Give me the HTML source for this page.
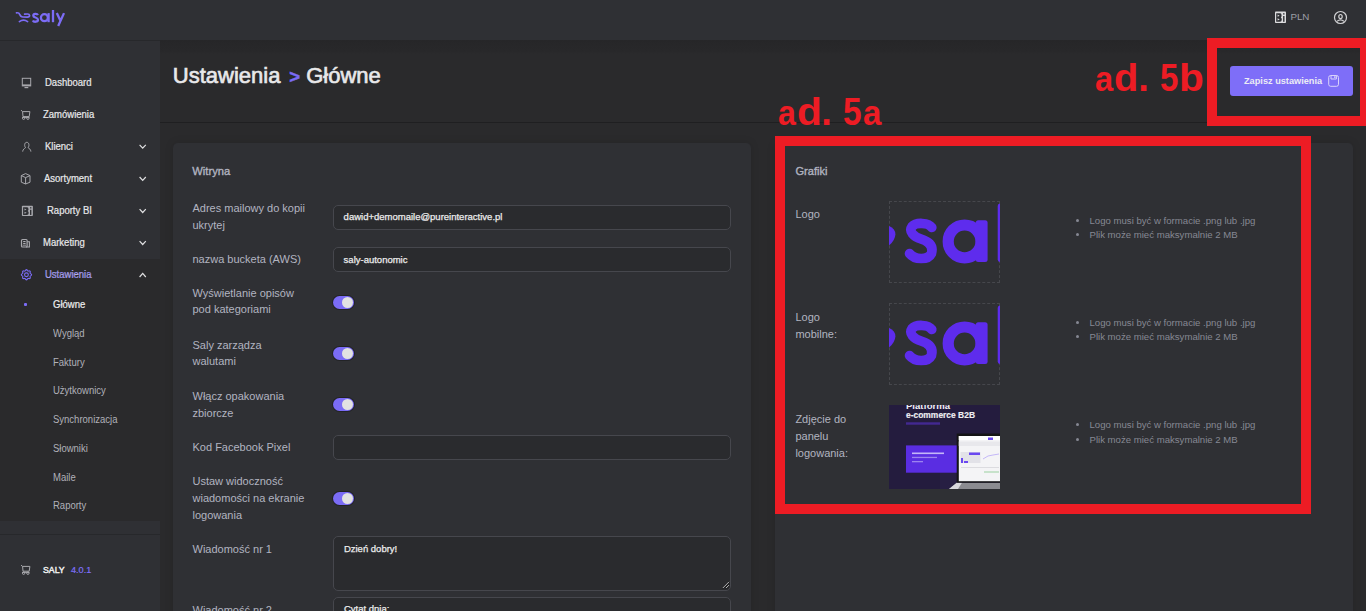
<!DOCTYPE html>
<html><head><meta charset="utf-8">
<style>
*{margin:0;padding:0;box-sizing:border-box}
html,body{width:1366px;height:611px;overflow:hidden;background:#2a2a2c;font-family:"Liberation Sans",sans-serif}
.a{position:absolute}
.t{position:absolute;white-space:nowrap;line-height:1}
#hdr{left:0;top:0;width:1366px;height:40px;background:#2f3034}
#hline{left:0;top:40px;width:160px;height:1px;background:#27282b}
#sbU{left:0;top:41px;width:160px;height:218px;background:#2f3034}
#sbL{left:0;top:259px;width:160px;height:262px;background:#2a2a2c}
#sbS{left:0;top:521px;width:160px;height:13px;background:#2f3034}
#sbLine{left:0;top:534px;width:160px;height:1px;background:#27282b}
#sbB{left:0;top:535px;width:160px;height:76px;background:#2f3034}
.mi{font-size:10px;color:#e8e8ea;-webkit-text-stroke:0.2px #e8e8ea;transform:scaleX(.95);transform-origin:0 0}
.sm{font-size:10px;color:#b0b1b9;transform:scaleX(.95);transform-origin:0 0}
.lbl{font-size:11px;color:#b2b4c0}
.inp{position:absolute;left:333px;width:398px;border:1px solid #46474d;border-radius:5px;background:#2a2b2e}
.itx{font-size:9.5px;color:#ececec;-webkit-text-stroke:0.25px #ececec}
.tg{position:absolute;left:333px;width:21px;height:13px;border-radius:7px;background:#7b6cf6;box-shadow:0 0 0 1px #222326}
.tg i{position:absolute;right:1px;top:1px;width:11px;height:11px;border-radius:50%;background:#e2e2e2}
.card{position:absolute;top:143px;height:480px;background:#2f3034;border-radius:5px;box-shadow:0 0 8px rgba(0,0,0,.13)}
.bl{font-size:9.6px;color:#868893}
.dot{position:absolute;width:3px;height:3px;border-radius:50%;background:#868893}
.red{color:#ed1c24;font-weight:bold;font-size:38px}
.rbox{position:absolute;border:10px solid #ed1c24}
.dash{position:absolute;left:889px;width:111px;height:82px;border:1px dashed #46474c}
</style></head><body>
<div id="hdr" class="a"></div>
<div id="hline" class="a"></div>
<div id="sbU" class="a"></div>
<div id="sbL" class="a"></div>
<div id="sbS" class="a"></div>
<div id="sbLine" class="a"></div>
<div id="sbB" class="a"></div>
<div class="a" style="left:160px;top:40px;width:1206px;height:20px;background:linear-gradient(#262628,#28282a 55%,#2a2a2c 70%,#2a2a2c)"></div>
<!-- main line -->
<div class="a" style="left:160px;top:122px;width:1206px;height:1px;background:#1f1f21"></div>

<!-- logo -->
<svg class="a" style="left:0;top:0" width="80" height="40" viewBox="0 0 80 40">
 <g fill="none" stroke="#7c6cf5" stroke-linecap="round" stroke-width="1.7">
  <path d="M16.5,12.8 Q19,12.4 19.8,14.6 Q20.5,16.9 22.8,17 L27.3,17.2 Q29.6,17 29.6,15.5 Q29.4,13.9 27.4,14 L24.6,14.2"/>
  <path d="M19.4,21.6 Q23.5,18.8 27.6,21.6"/>
 </g>
 <g fill="none" stroke="#7c6cf5" stroke-width="2.3">
  <path d="M38,15 C37.2,13.6 33.3,13.3 33.3,15.7 C33.3,17.8 38,17.2 38,19.7 C38,22.2 33.7,22.3 32.8,20.5"/>
  <circle cx="44.4" cy="17.7" r="3.5"/>
  <path d="M48.6,13.1 V22.2"/>
  <path d="M53,10 V22.2"/>
  <path d="M56.8,13.1 L60.8,21.6 M64,13.1 L58.2,26"/>
 </g>
</svg>

<!-- header right -->
<svg class="a" style="left:1270px;top:8px" width="20" height="20" viewBox="1270 8 20 20">
 <rect x="1275" y="11.6" width="11" height="11.4" rx="0.8" fill="#dcdcde"/>
 <path d="M1276.20,13.20 H1280.20 Q1281.60,13.20 1281.60,15.40 Q1281.60,16.80 1280.80,17.40 Q1281.80,18.00 1281.80,19.60 Q1281.80,21.80 1280.00,21.80 H1276.20 Z" fill="#2f3034"/><path d="M1277.60,14.60 L1279.60,15.70 L1277.60,16.80 Z M1277.60,18.20 L1279.80,19.40 L1277.60,20.60 Z" fill="#dcdcde"/>
 <rect x="1283.10" y="13.20" width="1.40" height="1.40" fill="#2f3034"/>
 <rect x="1283.10" y="16.00" width="1.40" height="5.80" fill="#2f3034"/>
</svg>
<div class="t" style="left:1290.5px;top:12.4px;font-size:9.8px;color:#9d9ea5;letter-spacing:-0.1px">PLN</div>
<svg class="a" style="left:1333px;top:10px" width="16" height="16" viewBox="0 0 16 16">
 <g fill="none" stroke="#d2d2d4" stroke-width="1.2">
  <circle cx="7.5" cy="7.5" r="6"/>
  <ellipse cx="7.5" cy="6.6" rx="1.7" ry="2.1"/>
  <path d="M4.1,11.2 Q7.5,8.4 10.9,11.2"/>
 </g>
</svg>


<!-- sidebar icons -->
<svg class="a" style="left:0;top:60px" width="40" height="240" viewBox="0 60 40 240">
 <g fill="none" stroke="#a8a8ad" stroke-width="1">
  <rect x="22.3" y="78.3" width="8.4" height="7.6"/>
  <path d="M22.3,85.2 H30.7" stroke-width="1.6"/>
  <path d="M24.5,87.6 H28.3" stroke-width="1.2"/>
  <!-- cart -->
  <path d="M21,110.2 L22.6,111.6 L23,116.6 H29.2 L29.9,111.6 H22.6"/>
  <circle cx="23.6" cy="118.2" r="1.2"/><circle cx="27.9" cy="118.2" r="1.2"/>
  <path d="M22,117.4 H29.4"/>
  <!-- person -->
  <path d="M25.6,147.6 C24.2,146.4 24.2,142.3 26.8,142.3 C29.4,142.3 29.4,146.4 28,147.6 C29.2,148.5 30.8,149.4 30.9,151.6 M25.6,147.6 C24.4,148.5 22.8,149.4 22.7,151.6"/>
  <!-- box -->
  <path d="M25.6,173.6 L30,175.6 V182.2 L25.6,184 L21.3,182.2 V175.6 Z M21.3,175.6 L25.6,177.6 L30,175.6 M25.6,177.6 V184"/>
 </g>
 <g fill="none" stroke="#a8a8ad" stroke-width="1">
  
  <rect x="21.5" y="239.5" width="5.6" height="7.5" rx="1" stroke-width="1.2"/>
  <path d="M27.1,241.8 H29.4 V247 H26" stroke-width="1.1"/>
  <path d="M23.2,241.6 H25.6 M23.2,243.6 H25.6" stroke="#bdbdc2" stroke-width="1"/>
  <rect x="22.6" y="244.6" width="3.6" height="1.8" fill="#77777c" stroke="none"/>
 </g>
 <rect x="21.9" y="205.8" width="11" height="10.2" rx="0.8" fill="#a8a8ad"/>
 <path d="M23.10,207.23 H27.10 Q28.50,207.23 28.50,209.20 Q28.50,210.45 27.70,210.99 Q28.70,211.53 28.70,212.96 Q28.70,214.93 26.90,214.93 H23.10 Z" fill="#2f3034"/><path d="M24.50,208.48 L26.50,209.47 L24.50,210.45 Z M24.50,211.71 L26.70,212.78 L24.50,213.85 Z" fill="#a8a8ad"/>
 <rect x="30.00" y="207.23" width="1.40" height="1.25" fill="#2f3034"/>
 <rect x="30.00" y="209.74" width="1.40" height="5.19" fill="#2f3034"/>
 <g fill="none" stroke="#7b6cf6" stroke-width="1.1">
  <path d="M31.55,274.75 L31.47,275.08 L31.23,275.38 L30.91,275.64 L30.58,275.86 L30.31,276.06 L30.15,276.28 L30.10,276.55 L30.15,276.89 L30.23,277.28 L30.28,277.69 L30.23,278.06 L30.06,278.36 L29.76,278.53 L29.39,278.58 L28.98,278.53 L28.59,278.45 L28.25,278.40 L27.98,278.45 L27.76,278.61 L27.56,278.88 L27.34,279.21 L27.08,279.53 L26.78,279.77 L26.45,279.85 L26.12,279.77 L25.82,279.53 L25.56,279.21 L25.34,278.88 L25.14,278.61 L24.92,278.45 L24.65,278.40 L24.31,278.45 L23.92,278.53 L23.51,278.58 L23.14,278.53 L22.84,278.36 L22.67,278.06 L22.62,277.69 L22.67,277.28 L22.75,276.89 L22.80,276.55 L22.75,276.28 L22.59,276.06 L22.32,275.86 L21.99,275.64 L21.67,275.38 L21.43,275.08 L21.35,274.75 L21.43,274.42 L21.67,274.12 L21.99,273.86 L22.32,273.64 L22.59,273.44 L22.75,273.22 L22.80,272.95 L22.75,272.61 L22.67,272.22 L22.62,271.81 L22.67,271.44 L22.84,271.14 L23.14,270.97 L23.51,270.92 L23.92,270.97 L24.31,271.05 L24.65,271.10 L24.92,271.05 L25.14,270.89 L25.34,270.62 L25.56,270.29 L25.82,269.97 L26.12,269.73 L26.45,269.65 L26.78,269.73 L27.08,269.97 L27.34,270.29 L27.56,270.62 L27.76,270.89 L27.98,271.05 L28.25,271.10 L28.59,271.05 L28.98,270.97 L29.39,270.92 L29.76,270.97 L30.06,271.14 L30.23,271.44 L30.28,271.81 L30.23,272.22 L30.15,272.61 L30.10,272.95 L30.15,273.22 L30.31,273.44 L30.58,273.64 L30.91,273.86 L31.23,274.12 L31.47,274.42 L31.55,274.75Z"/>
  <circle cx="26.45" cy="274.75" r="1.9"/>
 </g>
</svg>
<!-- chevrons -->
<svg class="a" style="left:130px;top:130px" width="30" height="160" viewBox="130 130 30 160">
 <g fill="none" stroke="#e0e0e2" stroke-width="1.2">
  <path d="M139.6,144.9 L142.7,148.2 L145.8,144.9"/>
  <path d="M139.6,177 L142.7,180.3 L145.8,177"/>
  <path d="M139.6,209.2 L142.7,212.5 L145.8,209.2"/>
  <path d="M139.6,241.2 L142.7,244.5 L145.8,241.2"/>
  <path d="M139.6,277 L142.7,273.4 L145.8,277"/>
 </g>
</svg>
<svg class="a" style="left:18px;top:562px" width="16" height="16" viewBox="18 562 16 16">
 <g fill="none" stroke="#a8a8ad" stroke-width="1">
  <path d="M21,565.2 L22.6,566.4 L23,571.2 H29.2 L29.9,566.4 H22.6"/>
  <circle cx="23.6" cy="573.2" r="1.2"/><circle cx="27.9" cy="573.2" r="1.2"/>
  <path d="M22,572.4 H29.4"/>
 </g>
</svg>

<!-- sidebar menu -->
<div class="t mi" style="left:45.2px;top:77.98px">Dashboard</div>
<div class="t mi" style="left:43.4px;top:109.68px">Zamówienia</div>
<div class="t mi" style="left:44.9px;top:142.08px">Klienci</div>
<div class="t mi" style="left:43.5px;top:174.18px">Asortyment</div>
<div class="t mi" style="left:46.8px;top:206.48px">Raporty BI</div>
<div class="t mi" style="left:43.4px;top:238.08px">Marketing</div>
<div class="t mi" style="left:45px;top:269.78px;color:#7b6cf6">Ustawienia</div>
<div class="t mi" style="left:52.8px;top:300.08px;color:#f0f0f0">Główne</div>
<div class="t sm" style="left:52.8px;top:328.88px">Wygląd</div>
<div class="t sm" style="left:52.8px;top:357.68px">Faktury</div>
<div class="t sm" style="left:52.8px;top:386.48px">Użytkownicy</div>
<div class="t sm" style="left:52.8px;top:415.28px">Synchronizacja</div>
<div class="t sm" style="left:52.8px;top:444.18px">Słowniki</div>
<div class="t sm" style="left:52.8px;top:473.08px">Maile</div>
<div class="t sm" style="left:52.8px;top:501.38px">Raporty</div>
<div class="a" style="left:24px;top:303px;width:3px;height:3px;background:#7b6cf6;border-radius:1px"></div>
<div class="t" style="left:43.2px;top:564.8px;font-size:9.4px;color:#f0f0f0;-webkit-text-stroke:0.45px #f0f0f0;transform:scaleX(.93);transform-origin:0 0">SALY</div>
<div class="t" style="left:71.4px;top:564.8px;font-size:9.6px;color:#7f70fa;-webkit-text-stroke:0.2px #7f70fa;transform:scaleX(.95);transform-origin:0 0">4.0.1</div>

<!-- title -->
<div class="t" style="left:172.8px;top:65px;font-size:22px;color:#e8e8ea;-webkit-text-stroke:0.65px #e8e8ea">Ustawienia</div>
<div class="t" style="left:289.2px;top:67.5px;font-size:18.5px;font-weight:bold;color:#7b6cf6;-webkit-text-stroke:0.5px #7b6cf6">&gt;</div>
<div class="t" style="left:306.2px;top:65px;font-size:22px;color:#e8e8ea;-webkit-text-stroke:0.65px #e8e8ea">Główne</div>

<!-- cards -->
<div class="card" style="left:173px;width:578px"></div>
<div class="card" style="left:775px;width:578px"></div>

<!-- left card content -->
<div class="t" style="left:192.3px;top:165.9px;font-size:11.2px;color:#b2b4c0;-webkit-text-stroke:0.35px #b2b4c0">Witryna</div>
<div class="t lbl" style="left:192.5px;top:202.9px">Adres mailowy do kopii</div>
<div class="t lbl" style="left:192.5px;top:219.7px">ukrytej</div>
<div class="inp" style="top:205px;height:25px"></div>
<div class="t itx" style="left:343.6px;top:211.8px">dawid+demomaile@pureinteractive.pl</div>
<div class="t lbl" style="left:192.5px;top:253.5px">nazwa bucketa (AWS)</div>
<div class="inp" style="top:247px;height:25px"></div>
<div class="t itx" style="left:343.6px;top:254.7px">saly-autonomic</div>

<div class="t lbl" style="left:192.5px;top:287.5px">Wyświetlanie opisów</div>
<div class="t lbl" style="left:192.5px;top:304.2px">pod kategoriami</div>
<div class="tg" style="top:296px"><i></i></div>
<div class="t lbl" style="left:192.5px;top:339.6px">Saly zarządza</div>
<div class="t lbl" style="left:192.5px;top:355.5px">walutami</div>
<div class="tg" style="top:347px"><i></i></div>
<div class="t lbl" style="left:192.5px;top:391.4px">Włącz opakowania</div>
<div class="t lbl" style="left:192.5px;top:408.4px">zbiorcze</div>
<div class="tg" style="top:398px"><i></i></div>
<div class="t lbl" style="left:192.5px;top:442.1px">Kod Facebook Pixel</div>
<div class="inp" style="top:435px;height:25px"></div>
<div class="t lbl" style="left:192.5px;top:476.4px">Ustaw widoczność</div>
<div class="t lbl" style="left:192.5px;top:493.4px">wiadomości na ekranie</div>
<div class="t lbl" style="left:192.5px;top:510.3px">logowania</div>
<div class="tg" style="top:492px"><i></i></div>
<div class="t lbl" style="left:192.5px;top:544.1px">Wiadomość nr 1</div>
<div class="inp" style="top:536px;height:55px"></div>
<div class="t itx" style="left:343.9px;top:543.9px">Dzień dobry!</div>
<svg class="a" style="left:721px;top:580px" width="9" height="9" viewBox="0 0 9 9"><path d="M8.2,1.6 L1.6,8.2 M8.2,5 L5,8.2" stroke="#111" stroke-width="1.8" opacity="0.6"/><path d="M8,1.8 L1.8,8 M8,5.1 L5.1,8" stroke="#d4d4d6" stroke-width="0.9"/></svg>
<div class="t lbl" style="left:192.5px;top:605.4px">Wiadomość nr 2</div>
<div class="inp" style="top:597px;height:40px"></div>
<div class="t itx" style="left:343.9px;top:604.2px">Cytat dnia:</div>

<!-- right card content -->
<div class="t" style="left:795.4px;top:165.6px;font-size:11.1px;color:#b2b4c0;-webkit-text-stroke:0.35px #b2b4c0">Grafiki</div>
<div class="t lbl" style="left:795.4px;top:208.7px">Logo</div>
<div class="t lbl" style="left:795.4px;top:312.1px">Logo</div>
<div class="t lbl" style="left:795.4px;top:328.7px">mobilne:</div>
<div class="t lbl" style="left:795.4px;top:413.6px">Zdjęcie do</div>
<div class="t lbl" style="left:795.4px;top:430.7px">panelu</div>
<div class="t lbl" style="left:795.4px;top:447.6px">logowania:</div>

<div class="dash" style="top:201px"></div>
<div class="dash" style="top:303px"></div>
<svg class="a" style="left:889px;top:201px" width="111" height="82" viewBox="889 201 111 82">
 <g fill="#5e2ced">
  <path d="M889,226 Q895.5,228.5 895.4,234.5 Q895,240.5 889,245.5 Z"/>
  <rect x="975.8" y="220.3" width="11.8" height="41.7" rx="2.5"/>
  <rect x="997.7" y="203.5" width="12" height="58.5" rx="2.5"/>
 </g>
 <g fill="none" stroke="#5e2ced">
  <path d="M931.8,227.5 C928.5,222.5 916,222 912,226.5 C908.5,231.5 913.5,236.5 921,239 C929,241.5 933.5,246 931.5,253.5 C928,260.5 914.5,260 909.5,253.5" stroke-width="9.6" stroke-linecap="round"/>
  <circle cx="964.6" cy="241.4" r="16.4" stroke-width="11.2"/>
 </g>
</svg>
<svg class="a" style="left:889px;top:303px" width="111" height="82" viewBox="889 201 111 82">
 <g fill="#5e2ced">
  <path d="M889,226 Q895.5,228.5 895.4,234.5 Q895,240.5 889,245.5 Z"/>
  <rect x="975.8" y="220.3" width="11.8" height="41.7" rx="2.5"/>
  <rect x="997.7" y="203.5" width="12" height="58.5" rx="2.5"/>
 </g>
 <g fill="none" stroke="#5e2ced">
  <path d="M931.8,227.5 C928.5,222.5 916,222 912,226.5 C908.5,231.5 913.5,236.5 921,239 C929,241.5 933.5,246 931.5,253.5 C928,260.5 914.5,260 909.5,253.5" stroke-width="9.6" stroke-linecap="round"/>
  <circle cx="964.6" cy="241.4" r="16.4" stroke-width="11.2"/>
 </g>
</svg>
<svg class="a" style="left:889px;top:405px" width="111" height="84" viewBox="889 405 111 84">
 
 <rect x="889" y="405" width="111" height="84" fill="#241c3e"/>
 <rect x="940" y="440" width="60" height="49" fill="#2a2147" opacity="0.5"/>
 <text x="906" y="409" font-family="Liberation Sans" font-weight="bold" font-size="8.4" fill="#f0f0f4" textLength="44" lengthAdjust="spacingAndGlyphs">Platforma</text>
 <text x="906" y="417.8" font-family="Liberation Sans" font-weight="bold" font-size="8.2" fill="#eeeef2" stroke="#eeeef2" stroke-width="0.15" textLength="69" lengthAdjust="spacingAndGlyphs">e-commerce B2B</text>
 <rect x="906" y="422.3" width="34" height="2.4" fill="#5b33d6" opacity="0.55"/>
 <rect x="906" y="445.4" width="51" height="27.3" fill="#5a2de2"/>
 <rect x="912" y="452.5" width="32" height="1.6" fill="#e8e4ff" opacity="0.75"/>
 <rect x="912" y="456.8" width="25" height="1.3" fill="#c8bdf8" opacity="0.6"/>
 <rect x="912" y="461" width="11" height="1.3" fill="#c8bdf8" opacity="0.6"/>
 <path d="M949,489 L956.7,482.7 H1000 V489 Z" fill="#8b8b90"/>
 <path d="M949,489 L956.7,482.7 H962 L958,489 Z" fill="#d8d8dc"/>
 <rect x="956.7" y="433.5" width="44" height="49.2" fill="#141416"/>
 <rect x="958.8" y="436" width="42" height="45.2" fill="#f4f4f6"/>
 <rect x="958.8" y="436" width="42" height="4" fill="#ffffff"/>
 <rect x="988" y="437.5" width="5" height="2.5" fill="#6a48f0"/>
 <rect x="958.8" y="441.5" width="42" height="4.5" fill="#e8e8ec"/>
 <rect x="960.5" y="452" width="20" height="11" fill="#e2e2e8"/>
 <rect x="969" y="452.5" width="11" height="2.5" fill="#6a48f0"/>
 <rect x="961" y="458" width="2" height="5" fill="#6a48f0"/>
 <rect x="964" y="461" width="4" height="2" fill="#6a48f0"/>
 <path d="M983,459 L988,456 L993,455 L999,454" stroke="#b8a8f8" stroke-width="0.8" fill="none"/>
 <rect x="961" y="467" width="38" height="0.6" fill="#ccccd2"/>
 <rect x="984" y="471.5" width="15" height="1" fill="#9ad0a0"/>
</svg>


<!-- bullets -->
<div class="dot" style="left:1076px;top:219px"></div>
<div class="dot" style="left:1076px;top:233px"></div>
<div class="t bl" style="left:1089.5px;top:216px">Logo musi być w formacie .png lub .jpg</div>
<div class="t bl" style="left:1089.5px;top:230px">Plik może mieć maksymalnie 2 MB</div>
<div class="dot" style="left:1076px;top:321px"></div>
<div class="dot" style="left:1076px;top:335px"></div>
<div class="t bl" style="left:1089.5px;top:318px">Logo musi być w formacie .png lub .jpg</div>
<div class="t bl" style="left:1089.5px;top:332px">Plik może mieć maksymalnie 2 MB</div>
<div class="dot" style="left:1076px;top:423px"></div>
<div class="dot" style="left:1076px;top:438px"></div>
<div class="t bl" style="left:1089.5px;top:420px">Logo musi być w formacie .png lub .jpg</div>
<div class="t bl" style="left:1089.5px;top:434.8px">Plik może mieć maksymalnie 2 MB</div>

<!-- button -->
<div class="a" style="left:1230px;top:66px;width:123px;height:30px;background:#7e6ef8;border-radius:3px"></div>
<div class="t" style="left:1244px;top:77px;font-size:9.2px;font-weight:bold;color:#ececf4">Zapisz ustawienia</div>
<svg class="a" style="left:1327px;top:74px" width="14" height="14" viewBox="1327 74 14 14">
 <g fill="none" stroke="#d9d3fb" stroke-width="1">
  <rect x="1328.7" y="75.5" width="9.8" height="10.8" rx="2"/>
  <path d="M1331,75.5 V79 H1336.4 V75.5"/>
 </g>
 <rect x="1334.2" y="76.2" width="1.3" height="1.8" fill="#d9d3fb"/>
</svg>

<!-- annotations -->
<div class="rbox" style="left:1207px;top:38px;width:163px;height:88px"></div>
<div class="rbox" style="left:775px;top:136px;width:536px;height:378px"></div>
<div class="t red" style="left:1094.96px;top:58.6px;transform:scale(0.857,0.946);transform-origin:0 32.17px">a</div>
<div class="t red" style="left:1114.20px;top:58.6px;transform:scaleX(1.047);transform-origin:0 0">d</div>
<div class="t red" style="left:1138.30px;top:58.6px;transform:scaleX(1.000);transform-origin:0 0">.</div>
<div class="t red" style="left:1159.96px;top:58.6px;transform:scaleX(0.868);transform-origin:0 0">5</div>
<div class="t red" style="left:1178.80px;top:58.6px;transform:scaleX(1.068);transform-origin:0 0">b</div>
<div class="t red" style="left:777.90px;top:92.6px;transform:scale(0.842,0.946);transform-origin:0 32.17px">a</div>
<div class="t red" style="left:796.80px;top:92.6px;transform:scaleX(1.073);transform-origin:0 0">d</div>
<div class="t red" style="left:821.15px;top:92.6px;transform:scaleX(1.000);transform-origin:0 0">.</div>
<div class="t red" style="left:842.70px;top:92.6px;transform:scaleX(0.878);transform-origin:0 0">5</div>
<div class="t red" style="left:862.70px;top:92.6px;transform:scale(0.867,0.946);transform-origin:0 32.17px">a</div>
</body></html>
